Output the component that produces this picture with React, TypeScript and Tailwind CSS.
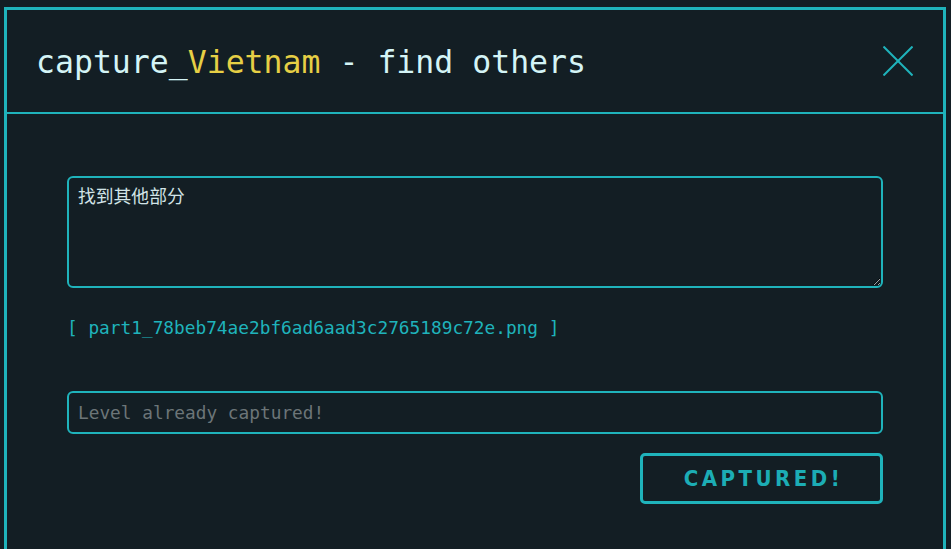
import React from "react";

const mono = { fontFamily: '"DejaVu Sans Mono", "Noto Sans CJK SC", monospace' };

export default function App() {
  return (
    <div className="min-h-[549px] w-[951px] overflow-hidden bg-[#131e24] pt-[7px] pl-[4px]">
      <div className="w-[942px] h-[560px] border-[3px] border-[#1fb3bb] bg-[#131e24]">
        {/* header */}
        <div className="flex h-[104px] items-center justify-between border-b-2 border-[#1fb3bb] pl-[29px] pr-[30px]">
          <h1 className="pt-[4px] text-[31.5px] leading-none text-[#d4f4f6]" style={mono}>
            capture_<span className="text-[#e6cf45]">Vietnam</span> - find others
          </h1>
          <button className="h-[30px] w-[30px] text-[#1fb3bb]" aria-label="close">
            <svg viewBox="0 0 30 30" width="30" height="30" fill="none" stroke="currentColor" strokeWidth="2">
              <line x1="0.5" y1="0.5" x2="29.5" y2="29.5" />
              <line x1="29.5" y1="0.5" x2="0.5" y2="29.5" />
            </svg>
          </button>
        </div>

        {/* body */}
        <div className="flex flex-col px-[60px] pt-[62px]">
          <textarea
            defaultValue="找到其他部分"
            className="h-[112px] w-full resize-y rounded-md border-2 border-[#1fb3bb] bg-transparent px-[9px] pt-[8px] text-[17.8px] leading-[1.2] text-[#d2e4e7] outline-none"
            style={mono}
          />
          <a className="mt-[29px] text-[17.8px] leading-[21px] text-[#1fb3bb]" style={mono}>
            [ part1_78beb74ae2bf6ad6aad3c2765189c72e.png ]
          </a>
          <input
            placeholder="Level already captured!"
            className="mt-[53px] h-[43px] w-full rounded-md border-2 border-[#1fb3bb] bg-transparent px-[9px] text-[17.8px] text-[#d2e4e7] outline-none placeholder:text-[#6c7578]"
            style={mono}
          />
          <div className="mt-[19px] flex justify-end">
            <button
              className="h-[51px] w-[243px] rounded-[5px] border-[3px] border-[#1fb3bb] pl-[4px] text-[22px] font-bold tracking-[3.5px] text-[#1cadb5]"
              style={{ fontFamily: '"Liberation Sans Narrow", "DejaVu Sans Condensed", sans-serif' }}
            >
              CAPTURED!
            </button>
          </div>
        </div>
      </div>
    </div>
  );
}
